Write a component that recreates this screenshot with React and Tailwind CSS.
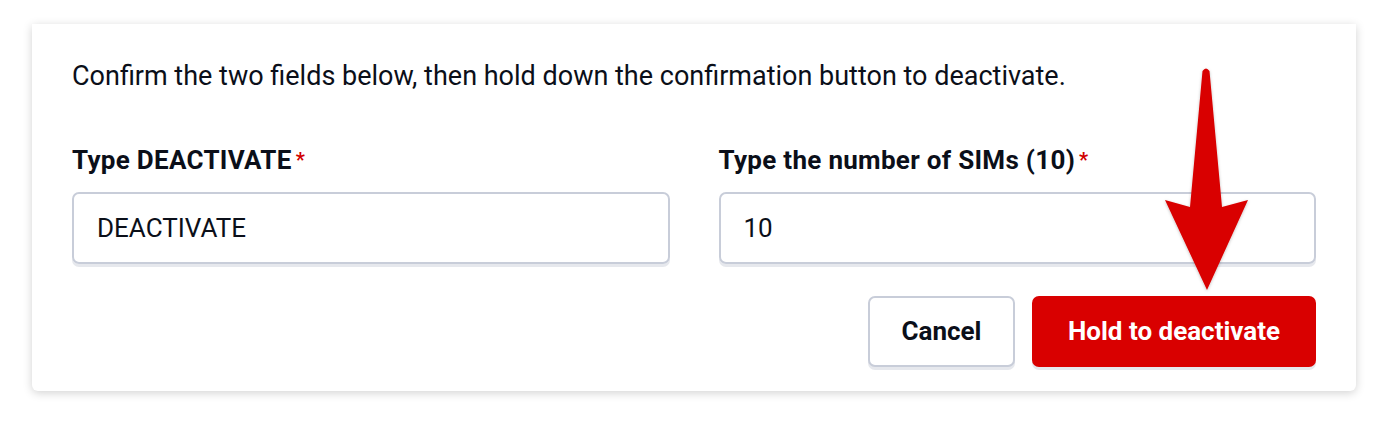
import React from "react";

export default function App() {
  return (
    <div className="w-[1388px] h-[432px] bg-white pt-[24px] px-[32px] relative" style={{ fontFamily: "Roboto, 'Liberation Sans', sans-serif" }}>
      <div className="bg-white rounded-b-[6px] shadow-[0_2px_10px_rgba(0,0,0,0.18)] px-[40px] pt-[36px] pb-[24px] text-[#0b0f19]">
        <p className="text-[27px] leading-[32px] h-[32px]">Confirm the two fields below, then hold down the confirmation button to deactivate.</p>
        <div className="grid grid-cols-2 gap-x-[49px] mt-[52px]">
          <div>
            <label className="block text-[26px] font-bold leading-[32px] tracking-[0.3px]">Type DEACTIVATE<span className="text-[#d10000] ml-[4px] text-[20px] align-top">*</span></label>
            <div className="mt-[16px] h-[72px] rounded-[7px] border-2 border-[#c8cdd9] shadow-[0_3px_0_#e6e8ed] flex items-center px-[23px] text-[26px]">DEACTIVATE</div>
          </div>
          <div>
            <label className="block text-[26px] font-bold leading-[32px] tracking-[0.3px]">Type the number of SIMs (10)<span className="text-[#d10000] ml-[4px] text-[20px] align-top">*</span></label>
            <div className="mt-[16px] h-[72px] rounded-[7px] border-2 border-[#c8cdd9] shadow-[0_3px_0_#e6e8ed] flex items-center px-[23px] text-[26px]">10</div>
          </div>
        </div>
        <div className="flex justify-end gap-[17px] mt-[32px]">
          <button className="w-[147px] h-[71px] rounded-[7px] border-2 border-[#c8cdd9] bg-white shadow-[0_3px_0_#e6e8ed] text-[26px] font-bold">Cancel</button>
          <button className="w-[284px] h-[71px] rounded-[7px] bg-[#d90000] text-white shadow-[0_3px_0_#e6e8ed] text-[26px] font-bold">Hold to deactivate</button>
        </div>
      </div>
      <svg className="absolute left-0 top-0 pointer-events-none" width="1388" height="432" viewBox="0 0 1388 432">
        <defs>
          <filter id="s" x="-50%" y="-50%" width="200%" height="200%">
            <feDropShadow dx="0" dy="1" stdDeviation="1.5" floodColor="#000" floodOpacity="0.25" />
          </filter>
        </defs>
        <path d="M1202.5 71 Q1206 66 1209.5 71 L1222 207 L1248 200 L1207 290 L1165 200 L1190 207 Z" fill="#d90000" filter="url(#s)" />
      </svg>
    </div>
  );
}
